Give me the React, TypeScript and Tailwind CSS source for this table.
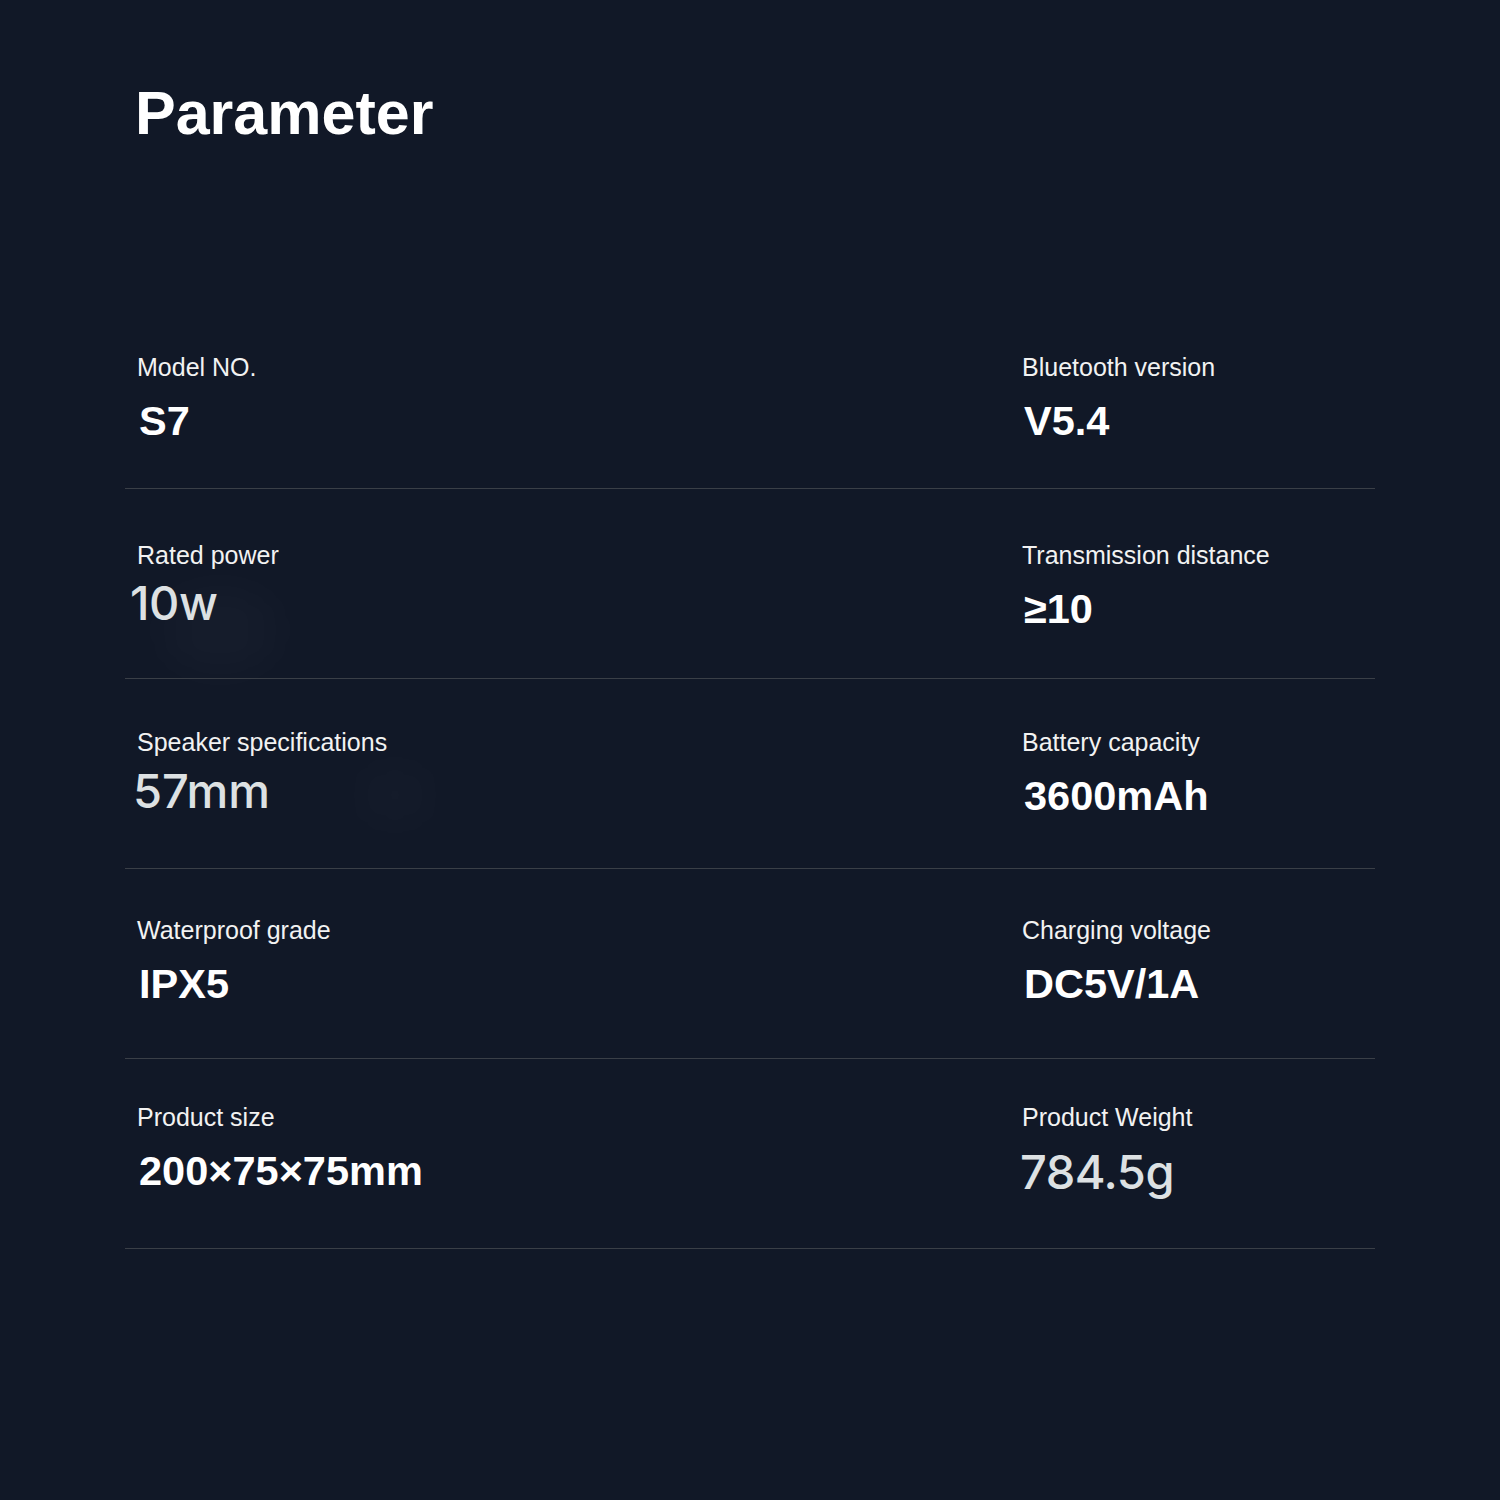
import React from 'react';

type Spec = { label: string; value: string; soft?: boolean; shift?: string };

// the rows in the artwork drift up a little against the rules, so each row gets its own padding
const rows: { pad: string; cells: [Spec, Spec] }[] = [
  { pad: 'pt-[53px] pb-[43px]', cells: [{ label: 'Model NO.', value: 'S7' }, { label: 'Bluetooth version', value: 'V5.4' }] },
  { pad: 'pt-[51px] pb-[45px]', cells: [{ label: 'Rated power', value: '10w', soft: true, shift: 'mt-[15px] -ml-[7px] tracking-[-0.01em]' }, { label: 'Transmission distance', value: '≥10' }] },
  { pad: 'pt-[48px] pb-[47px]', cells: [{ label: 'Speaker specifications', value: '57mm', soft: true, shift: 'mt-[16px] -ml-[4px]' }, { label: 'Battery capacity', value: '3600mAh' }] },
  { pad: 'pt-[46px] pb-[50px]', cells: [{ label: 'Waterproof grade', value: 'IPX5' }, { label: 'Charging voltage', value: 'DC5V/1A' }] },
  { pad: 'pt-[43px] pb-[46px]', cells: [{ label: 'Product size', value: '200×75×75mm' }, { label: 'Product Weight', value: '784.5g', soft: true, shift: 'mt-[22px] -ml-[2px] tracking-[-0.01em]' }] },
];

function Cell({ spec }: { spec: Spec }) {
  return (
    <div className="flex flex-col">
      <div className="text-[25px] leading-[30px] text-[#f2f2f2] font-['Liberation_Sans',Arial,sans-serif]">
        {spec.label}
      </div>
      {spec.soft ? (
        <div
          className={`h-[48px] text-[47px] leading-[36px] font-medium text-[#dde1e3] font-['Inter','Liberation_Sans',sans-serif] ${spec.shift ?? ''}`}
        >
          {spec.value}
        </div>
      ) : (
        <div className="mt-[15px] h-[48px] pl-[2px] text-[41.5px] leading-[48px] font-bold text-white font-['Liberation_Sans',Arial,sans-serif]">
          {spec.value}
        </div>
      )}
    </div>
  );
}

export default function App() {
  return (
    <div className="relative w-[1500px] h-[1500px] bg-[#111827] overflow-hidden">
      {/* faint blobs left over in the artwork */}
      <div className="absolute left-[160px] top-[590px] w-[120px] h-[80px] rounded-full bg-white/[0.025] blur-xl" />
      <div className="absolute left-[355px] top-[765px] w-[80px] h-[60px] rounded-full bg-white/[0.02] blur-xl" />

      <div className="relative pt-[82px] px-[125px]">
        <h1 className="pl-[10px] text-[61px] leading-[62px] font-bold text-white font-['Liberation_Sans',Arial,sans-serif]">
          Parameter
        </h1>

        <div className="mt-[155px]">
          {rows.map((row, i) => (
            <div
              key={i}
              className={`grid grid-cols-[885px_1fr] px-3 border-b border-[#3a3f47] ${row.pad}`}
            >
              <Cell spec={row.cells[0]} />
              <Cell spec={row.cells[1]} />
            </div>
          ))}
        </div>
      </div>
    </div>
  );
}
